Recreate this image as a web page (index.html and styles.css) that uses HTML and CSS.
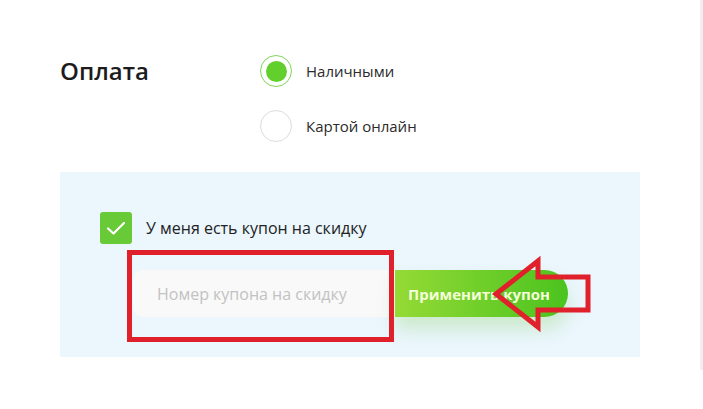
FILE: index.html
```html
<!DOCTYPE html>
<html lang="ru">
<head>
    <meta charset="UTF-8">
    <meta name="viewport" content="width=device-width, initial-scale=1.0">
    <title>Оплата</title>
    <link rel="stylesheet" href="styles.css">
</head>
<body>

    <div class="page">
        <div class="payment">
            <h2 class="title">Оплата</h2>
            <div class="options">
                <label class="option"><span class="radio checked"></span>Наличными</label>
                <label class="option"><span class="radio"></span>Картой онлайн</label>
            </div>
        </div>

        <div class="coupon">
            <label class="check-row">
                <span class="checkbox">
                    <svg width="20" height="16" viewBox="0 0 20 16"><path d="M2 8.5l5.5 5L18 3" fill="none" stroke="#fff" stroke-width="2.2" stroke-linecap="round" stroke-linejoin="round"/></svg>
                </span>
                У меня есть купон на скидку
            </label>
            <div class="coupon-form">
                <input type="text" class="coupon-input" placeholder="Номер купона на скидку">
                <button type="button" class="apply-btn">Применить купон</button>
            </div>
            <div class="mark-box"></div>
        </div>

        <!-- red arrow drawn over the button -->
        <svg class="mark-arrow" width="703" height="409" viewBox="0 0 703 409">
            <polygon points="496,294 538,261 538,277 588,277 588,310 538,310 538,327" fill="none" stroke="#e0212b" stroke-width="5" stroke-linejoin="miter"/>
        </svg>

        <div class="scrollbar"></div>
    </div>

</body>
</html>
```

FILE: styles.css
```css
body {
    margin: 0;
    font-family: "Open Sans", Arial, sans-serif;
    background: #fff;
    color: #2b2b2b;
}
.page {
    position: relative;
    width: 703px;
    height: 409px;
    overflow: hidden;
}
.payment {
    display: flex;
    padding: 55px 0 0 60px;
}
.title {
    width: 200px;
    margin: 0;
    font-size: 24px;
    font-weight: 600;
    line-height: 32px;
    color: #1c1c1c;
}
.options {
    display: flex;
    flex-direction: column;
    gap: 23px;
}
.option {
    display: flex;
    align-items: center;
    gap: 14px;
    font-size: 15px;
    height: 32px;
    line-height: 30px;
}
.radio {
    box-sizing: border-box;
    width: 32px;
    height: 32px;
    border-radius: 50%;
    border: 1px solid #dcdcdc;
    display: flex;
    align-items: center;
    justify-content: center;
}
.radio.checked {
    border-color: #80d45c;
}
.radio.checked::after {
    content: "";
    width: 21px;
    height: 21px;
    border-radius: 50%;
    background: #63cf2d;
}
.coupon {
    position: relative;
    margin: 30px 0 0 60px;
    width: 580px;
    height: 185px;
    box-sizing: border-box;
    padding: 40px 0 0 40px;
    background: #ebf6fd;
}
.check-row {
    display: flex;
    align-items: center;
    gap: 14px;
    font-size: 16px;
    color: #222;
}
.checkbox {
    width: 32px;
    height: 32px;
    border-radius: 3px;
    background: #68ca36;
    display: flex;
    align-items: center;
    justify-content: center;
}
.coupon-form {
    display: flex;
    margin: 26px 0 0 33px;
}
.coupon-input {
    width: 262px;
    height: 47px;
    box-sizing: border-box;
    border: none;
    border-radius: 10px 0 0 10px;
    background: #f9f9f9;
    padding: 0 0 0 24px;
    font-family: inherit;
    font-size: 16px;
    outline: none;
}
.coupon-input::placeholder {
    color: #c2c2c2;
}
.apply-btn {
    width: 173px;
    height: 47px;
    border: none;
    border-radius: 0 24px 24px 0;
    background: linear-gradient(to right, #95da35, #4bc31f);
    color: #f3ffd8;
    font-family: inherit;
    font-size: 15px;
    font-weight: 700;
    text-align: left;
    padding: 0 0 0 13px;
    box-shadow: 0 12px 18px rgba(110, 200, 60, 0.25);
    cursor: pointer;
}
.mark-box {
    position: absolute;
    left: 67px;
    top: 78px;
    width: 257px;
    height: 82px;
    border: 5px solid #e0212b;
}
.mark-arrow {
    position: absolute;
    top: 0;
    left: 0;
}
.scrollbar {
    position: absolute;
    top: 0;
    right: 0;
    width: 3px;
    height: 370px;
    background: #efefef;
}
```
